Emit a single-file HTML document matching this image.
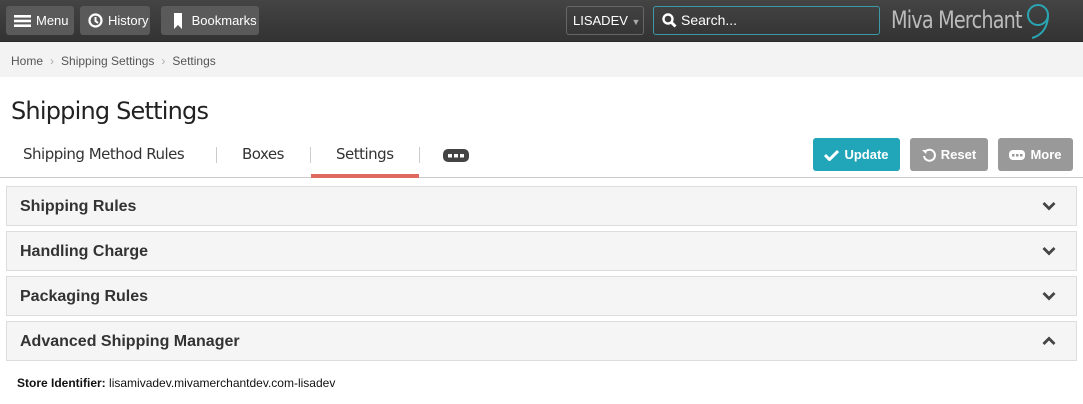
<!DOCTYPE html>
<html><head><style>
*{box-sizing:border-box;margin:0;padding:0}
body{width:1083px;height:404px;overflow:hidden;background:#fff;font-family:"Liberation Sans",Arial,sans-serif;position:relative}
.top{position:absolute;left:0;top:0;width:1083px;height:42px;background:linear-gradient(#444,#333);border-bottom:1px solid #2a2a2a}
.btn{position:absolute;top:6px;height:29px;background:#5a5a5a;border-radius:3px;color:#fff;font-size:13px;line-height:29px;padding-left:8px;display:flex;align-items:center;gap:5px}
.crumb{position:absolute;top:42px;left:0;width:1083px;height:35px;background:#f3f3f3;font-size:12px;color:#555;padding:12px 11px}
.crumb span{color:#aaa;margin:0 7px}
h1{position:absolute;left:11px;top:97px;font-size:24px;color:#222;font-family:"DejaVu Sans","Liberation Sans",sans-serif;font-weight:normal;letter-spacing:-0.8px}
.tab{position:absolute;top:145px;font-size:15px;color:#333;font-family:"DejaVu Sans","Liberation Sans",sans-serif;letter-spacing:-0.5px}
.sep{position:absolute;top:147px;width:1px;height:16px;background:#ccc}
.line{position:absolute;left:0;top:177px;width:1083px;height:1px;background:#ccc}
.act{position:absolute;left:311px;top:174px;width:108px;height:4px;background:#e06a5e}
.ab{position:absolute;top:138px;height:33px;border-radius:3px;color:#fff;font-size:13px;font-weight:bold;display:flex;align-items:center;justify-content:center;gap:5px}
.panel{position:absolute;left:6px;width:1071px;height:40px;background:#f5f5f5;border:1px solid #ddd;font-size:16px;font-weight:bold;color:#333;padding:11px 13px}
.chev{position:absolute;right:20px;top:14px}
</style></head><body>
<div class="top">
 <div class="btn" style="left:6px;width:68px"><svg width="17" height="14"><rect y="1" width="17" height="2.6" fill="#fff"/><rect y="5.7" width="17" height="2.6" fill="#fff"/><rect y="10.4" width="17" height="2.6" fill="#fff"/></svg>Menu</div>
 <div class="btn" style="left:80px;width:70px"><svg width="15" height="15"><circle cx="7.5" cy="7.5" r="6" fill="none" stroke="#fff" stroke-width="2.2"/><path d="M7.5 4v4l2.5 2" stroke="#fff" stroke-width="2" fill="none"/></svg>History</div>
 <div class="btn" style="left:161px;width:98px;padding-left:12px"><svg width="10" height="16"><path d="M1 0h8v16l-4-4-4 4z" fill="#fff"/></svg>&nbsp;Bookmarks</div>
 <div style="position:absolute;left:566px;top:6px;width:78px;height:29px;border:1px solid #666;border-radius:3px;color:#fff;font-size:13px;line-height:27px;padding-left:6px">LISADEV <span style="color:#aaa;font-size:9px">▼</span></div>
 <div style="position:absolute;left:653px;top:6px;width:227px;height:29px;border:1px solid #3a9aa8;border-radius:3px;color:#fff;font-size:14px;line-height:27px;padding-left:8px;display:flex;align-items:center;gap:4px"><svg width="15" height="15"><circle cx="6" cy="6" r="4.5" fill="none" stroke="#fff" stroke-width="2.4"/><path d="M9.5 9.5l4 4" stroke="#fff" stroke-width="3"/></svg>Search...</div>
 <div style="position:absolute;left:891px;top:6px;font-size:24px;color:#bbb;font-family:'DejaVu Sans',sans-serif;font-weight:normal;letter-spacing:-1px;transform:scaleX(0.8);transform-origin:left">Miva Merchant</div>
 <svg style="position:absolute;left:1022px;top:3px" width="30" height="36"><circle cx="16" cy="12" r="10" fill="none" stroke="#2aa5b3" stroke-width="2"/><path d="M26 12 C26 26 18 33 10 35" fill="none" stroke="#2aa5b3" stroke-width="2"/></svg>
</div>
<svg style="position:absolute;left:1024px;top:43px" width="20" height="14"><path d="M0 0h20v14l-10-5-10 5z" fill="#f26b53"/></svg>
<div class="crumb">Home<span>›</span>Shipping Settings<span>›</span>Settings</div>
<h1>Shipping Settings</h1>
<div class="tab" style="left:23px">Shipping Method Rules</div>
<div class="sep" style="left:216px"></div>
<div class="tab" style="left:242px">Boxes</div>
<div class="sep" style="left:310px"></div>
<div class="tab" style="left:336px">Settings</div>
<div class="sep" style="left:419px"></div>
<svg style="position:absolute;left:443px;top:149px" width="26" height="13"><rect width="26" height="13" rx="5" fill="#444"/><rect x="5" y="5" width="4" height="3.5" fill="#fff"/><rect x="11" y="5" width="4" height="3.5" fill="#fff"/><rect x="17" y="5" width="4" height="3.5" fill="#fff"/></svg>
<div class="line"></div><div class="act"></div>
<div class="ab" style="left:813px;width:87px;background:#21a5b8"><svg width="15" height="12"><path d="M1 6l4.5 4.5L14 2" stroke="#fff" stroke-width="3" fill="none"/></svg>Update</div>
<div class="ab" style="left:910px;width:78px;background:#999"><svg width="14" height="14"><path d="M3 4A5.5 5.5 0 1 1 2 8" stroke="#fff" stroke-width="2" fill="none"/><path d="M0 2l5 0 -1 4z" fill="#fff"/></svg>Reset</div>
<div class="ab" style="left:998px;width:75px;background:#999"><svg width="16" height="10"><rect width="16" height="10" rx="4" fill="#fff"/><rect x="3" y="4" width="2.5" height="2.5" fill="#999"/><rect x="7" y="4" width="2.5" height="2.5" fill="#999"/><rect x="11" y="4" width="2.5" height="2.5" fill="#999"/></svg>More</div>
<div class="panel" style="top:186px">Shipping Rules<svg class="chev" width="14" height="10"><path d="M1.5 2l5.5 5.5L12.5 2" stroke="#444" stroke-width="2.8" fill="none"/></svg></div>
<div class="panel" style="top:231px">Handling Charge<svg class="chev" width="14" height="10"><path d="M1.5 2l5.5 5.5L12.5 2" stroke="#444" stroke-width="2.8" fill="none"/></svg></div>
<div class="panel" style="top:276px">Packaging Rules<svg class="chev" width="14" height="10"><path d="M1.5 2l5.5 5.5L12.5 2" stroke="#444" stroke-width="2.8" fill="none"/></svg></div>
<div class="panel" style="top:321px">Advanced Shipping Manager<svg class="chev" width="14" height="10"><path d="M1.5 8l5.5-5.5L12.5 8" stroke="#444" stroke-width="2.8" fill="none"/></svg></div>
<div style="position:absolute;left:17px;top:376px;font-size:12px;color:#111"><b>Store Identifier:</b> lisamivadev.mivamerchantdev.com-lisadev</div>
</body></html>
